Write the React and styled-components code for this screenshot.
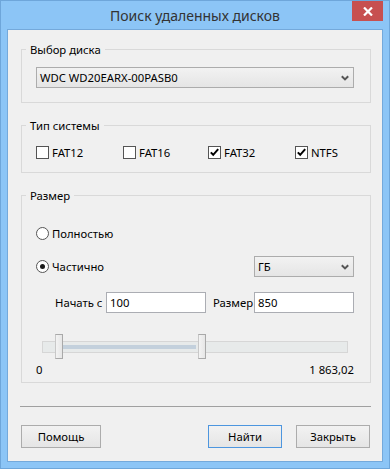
import React from 'react';
import styled, { createGlobalStyle } from 'styled-components';

const GlobalStyle = createGlobalStyle`
  html, body { margin: 0; padding: 0; background: #8cc5f6; }
  body {
    font-family: "Noto Sans", "Liberation Sans", sans-serif;
    font-size: 11.3px;
    color: #000;
  }
  * { box-sizing: border-box; }
`;

const Window = styled.div`
  width: 390px;
  height: 469px;
  background: #8cc5f6;
  border: 1px solid #6ea6da;
  padding: 0 6px 6px;
  display: flex;
  flex-direction: column;
`;

const TitleBar = styled.div`
  height: 28px;
  flex: none;
  display: grid;
  grid-template-columns: 1fr auto 1fr;
  align-items: start;
`;

const Title = styled.div`
  grid-column: 2;
  line-height: 29px;
  font-size: 14px;
  color: #333;
  white-space: nowrap;
`;

const CloseButton = styled.div`
  grid-column: 3;
  justify-self: end;
  width: 31px;
  height: 20px;
  background: #c75050;
  display: flex;
  align-items: center;
  justify-content: center;
`;

const Client = styled.div`
  flex: 1;
  border: 1px solid #74a9db;
  background: #f0f0f0;
  padding: 0 11px 13px 13px;
  display: flex;
  flex-direction: column;
`;

const Group = styled.fieldset`
  margin: ${(p) => p.$mt}px 0 0;
  border: 1px solid #d9d9d9;
  padding: ${(p) => p.$pt}px 16px ${(p) => p.$pb}px 14px;
  min-width: 0;
  display: flex;
  flex-direction: column;
`;

const Legend = styled.legend`
  padding: 0 4px;
  margin-left: -10px;
  line-height: 15px;
  color: #000;
`;

const Combo = styled.div`
  width: ${(p) => p.$w || '100%'};
  height: 21px;
  border: 1px solid #acacac;
  background: linear-gradient(#f2f2f2, #e5e5e5);
  display: flex;
  align-items: center;
  justify-content: space-between;
  padding: 0 4px 0 3px;
  line-height: 15px;
  white-space: nowrap;
`;

const CheckRow = styled.div`
  display: grid;
  grid-template-columns: 87px 85px 87px auto;
  height: 15px;
  align-items: center;
`;

const Option = styled.label`
  display: flex;
  align-items: center;
  gap: 3px;
  line-height: 15px;
  white-space: nowrap;
`;

const Box = styled.span`
  width: 13px;
  height: 13px;
  border: 1px solid #555;
  background: #fff;
  display: flex;
  align-items: center;
  justify-content: center;
  flex: none;
`;

const RadioCircle = styled.span`
  width: 13px;
  height: 13px;
  border: 1px solid #555;
  border-radius: 50%;
  background: #fff;
  display: flex;
  align-items: center;
  justify-content: center;
  flex: none;
  &::after {
    content: '';
    display: ${(p) => (p.$on ? 'block' : 'none')};
    width: 5px;
    height: 5px;
    border-radius: 50%;
    background: #1a1a1a;
  }
`;

const Row = styled.div`
  margin-top: ${(p) => p.$mt || 0}px;
  height: ${(p) => p.$h}px;
  display: flex;
  align-items: center;
  justify-content: space-between;
`;

const FieldRow = styled.div`
  margin-top: 15px;
  padding-left: 19px;
  height: 21px;
  display: grid;
  grid-template-columns: 51px 100px 48px 100px;
  align-items: center;
`;

const FieldLabel = styled.span`
  padding-left: ${(p) => p.$pl || 0}px;
  line-height: 15px;
  white-space: nowrap;
`;

const TextBox = styled.div`
  height: 21px;
  border: 1px solid #abadb3;
  background: #fff;
  padding-left: 3px;
  line-height: 19px;
`;

const Slider = styled.div`
  margin-top: 21px;
  height: 26px;
  position: relative;
  padding: 7px 6px 0;
`;

const Track = styled.div`
  height: 12px;
  border: 1px solid #d6d6d6;
  background: #e7eaea;
  position: relative;
`;

const Range = styled.div`
  position: absolute;
  top: 3px;
  height: 4px;
  background: #c3d0dc;
`;

const Thumb = styled.div`
  position: absolute;
  top: 0;
  width: 8px;
  height: 25px;
  border: 1px solid #a9a9a9;
  border-left-color: #c8c8c8;
  background: linear-gradient(90deg, #f3f3f3, #e6e6e6);
`;

const ScaleRow = styled.div`
  margin-top: 2px;
  display: flex;
  justify-content: space-between;
  line-height: 15px;
`;

const Separator = styled.div`
  margin: 23px 0 0 -1px;
  height: 1px;
  background: #a0a0a0;
  flex: none;
`;

const ButtonRow = styled.div`
  margin-top: 18px;
  display: flex;
  align-items: center;
  gap: 14px;
  padding-right: 1px;
`;

const Button = styled.div`
  width: ${(p) => p.$w}px;
  height: 23px;
  border: 1px solid ${(p) => (p.$primary ? '#4d96df' : '#acacac')};
  background: linear-gradient(#f2f2f2, #e5e5e5);
  display: flex;
  align-items: center;
  justify-content: center;
  line-height: 15px;
  flex: none;
`;

const Spacer = styled.div`
  flex: 1;
`;

const Chevron = () => (
  <svg width="8" height="6" viewBox="0 0 8 6">
    <path d="M0.8 1.2 L4 4.4 L7.2 1.2" fill="none" stroke="#555" strokeWidth="2" />
  </svg>
);

const Check = () => (
  <svg width="11" height="11" viewBox="0 0 11 11">
    <path d="M1.8 5.4 L4.2 7.8 L9.2 2.2" fill="none" stroke="#000" strokeWidth="2" />
  </svg>
);

const CheckBox = ({ checked, label }) => (
  <Option>
    <Box>{checked && <Check />}</Box>
    {label}
  </Option>
);

const Radio = ({ checked, label }) => (
  <Option>
    <RadioCircle $on={checked} />
    {label}
  </Option>
);

const fsTypes = [
  { label: 'FAT12', checked: false },
  { label: 'FAT16', checked: false },
  { label: 'FAT32', checked: true },
  { label: 'NTFS', checked: true },
];

const slider = { from: 13, to: 156, rangeStart: 20, rangeEnd: 153 };

export default function App() {
  return (
    <>
      <GlobalStyle />
      <Window>
        <TitleBar>
          <Title>Поиск удаленных дисков</Title>
          <CloseButton>
            <svg width="10" height="9" viewBox="0 0 10 9">
              <path d="M1 0.5 L9 8.5 M9 0.5 L1 8.5" stroke="#fff" strokeWidth="2.2" />
            </svg>
          </CloseButton>
        </TitleBar>
        <Client>
          <Group $mt={12} $pt={10} $pb={14}>
            <Legend>Выбор диска</Legend>
            <Combo>
              <span>WDC WD20EARX-00PASB0</span>
              <Chevron />
            </Combo>
          </Group>

          <Group $mt={15} $pt={12} $pb={12}>
            <Legend>Тип системы</Legend>
            <CheckRow>
              {fsTypes.map((t) => (
                <CheckBox key={t.label} checked={t.checked} label={t.label} />
              ))}
            </CheckRow>
          </Group>

          <Group $mt={15} $pt={23} $pb={5}>
            <Legend>Размер</Legend>
            <Row $h={15}>
              <Radio label="Полностью" />
            </Row>
            <Row $h={21} $mt={15}>
              <Radio checked label="Частично" />
              <Combo $w="100px">
                <span>ГБ</span>
                <Chevron />
              </Combo>
            </Row>
            <FieldRow>
              <FieldLabel>Начать с</FieldLabel>
              <TextBox>100</TextBox>
              <FieldLabel $pl={7}>Размер</FieldLabel>
              <TextBox>850</TextBox>
            </FieldRow>
            <Slider>
              <Track>
                <Range style={{ left: slider.rangeStart, width: slider.rangeEnd - slider.rangeStart }} />
              </Track>
              <Thumb style={{ left: 6 + slider.from }} />
              <Thumb style={{ left: 6 + slider.to }} />
            </Slider>
            <ScaleRow>
              <span>0</span>
              <span>1 863,02</span>
            </ScaleRow>
          </Group>

          <Separator />

          <ButtonRow>
            <Button $w={80}>Помощь</Button>
            <Spacer />
            <Button $w={74} $primary>Найти</Button>
            <Button $w={74}>Закрыть</Button>
          </ButtonRow>
        </Client>
      </Window>
    </>
  );
}
